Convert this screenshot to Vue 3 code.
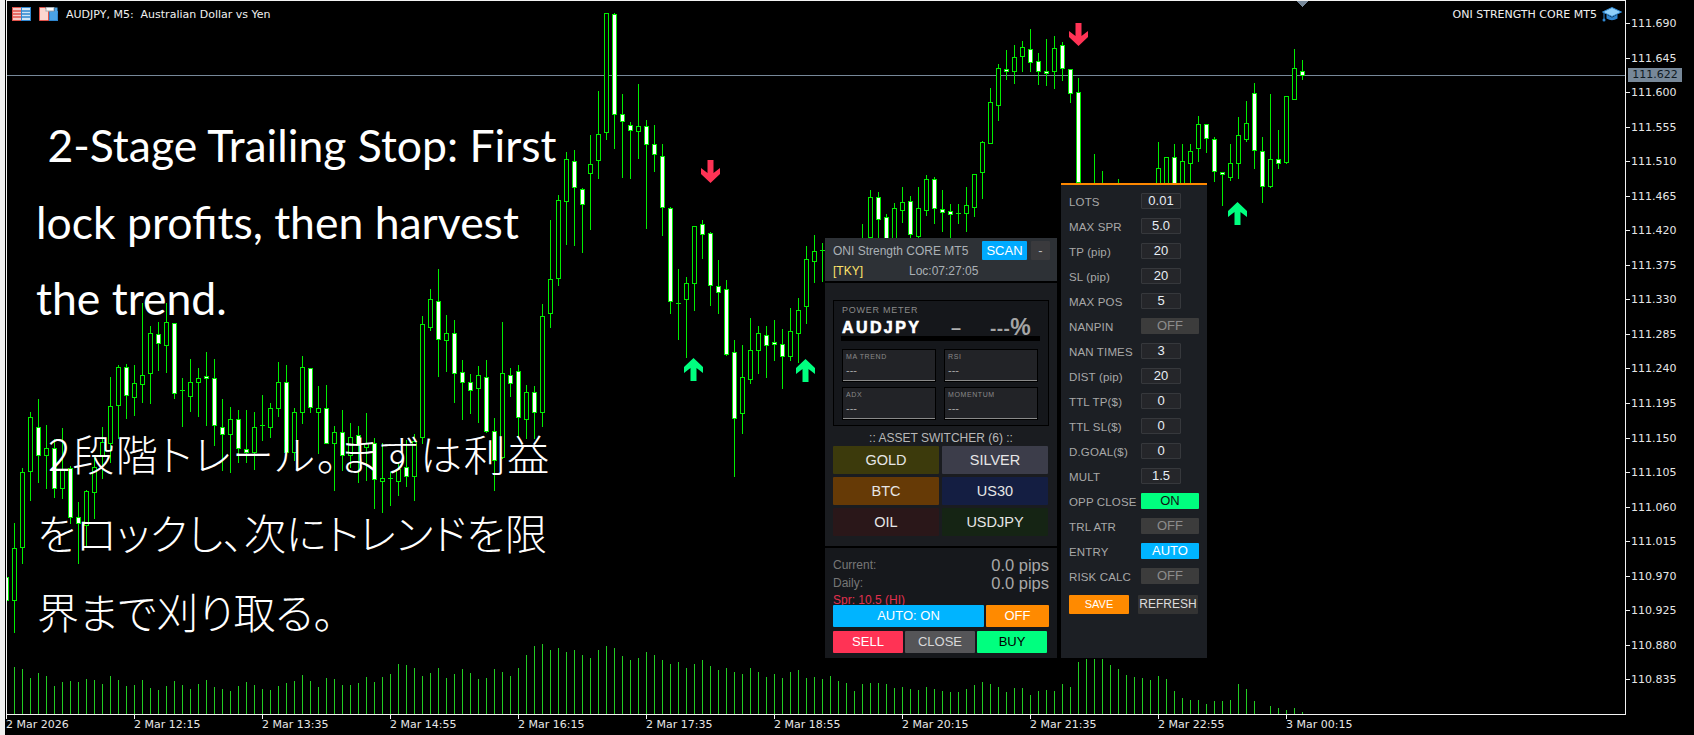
<script setup>
// [x, type (0 hollow, 1 white, 2 doji, 3 wick only), high, bodyTop, bodyBottom, low]
const rawBars = [
[6,1,560,577,600,640],[14,0,523,548,600,632],[22,0,468,472,547,563],[30,0,412,417,471,500],[38,1,399,427,455,482],
[46,0,425,448,455,488],[54,1,439,448,488,497],[62,0,428,469,488,498],[70,1,466,468,517,523],[78,1,502,517,523,563],
[86,0,490,491,525,545],[94,0,457,467,492,518],[102,0,427,442,455,478],[110,0,377,406,443,462],[118,0,365,367,405,438],
[126,1,364,367,395,418],[134,0,365,383,397,415],[142,0,303,375,384,402],[150,0,326,333,373,403],[158,1,322,334,343,370],
[166,0,303,322,345,372],[174,1,323,323,393,398],[182,2,378,390,390,426],[190,0,359,382,396,411],[198,0,368,378,382,416],
[206,1,352,376,378,425],[214,1,359,378,425,445],[222,1,399,427,434,470],[230,0,407,419,434,472],[238,1,410,419,448,462],
[246,1,410,449,452,462],[254,0,412,427,452,469],[262,2,395,425,425,440],[270,0,403,408,427,437],[278,0,362,382,408,416],
[286,1,365,382,452,452],[294,0,408,412,452,460],[302,0,356,367,412,423],[310,1,368,368,407,412],[318,0,386,408,412,453],
[326,1,385,408,443,443],[334,0,426,432,443,490],[342,1,410,432,455,470],[350,0,423,437,455,467],[358,1,426,435,445,482],
[366,0,413,443,447,480],[374,1,438,443,479,508],[382,0,443,478,481,512],[390,2,472,478,478,505],[398,0,462,469,481,495],
[406,1,440,467,476,486],[414,0,434,441,476,500],[422,0,316,324,437,443],[430,0,289,299,327,330],[438,1,269,301,339,376],
[446,0,315,333,340,371],[454,1,320,333,373,402],[462,1,360,372,382,419],[470,1,374,382,390,413],[478,0,366,375,388,422],
[486,1,360,377,431,432],[494,1,418,431,460,490],[502,0,322,373,457,458],[510,1,368,375,383,396],[518,1,365,371,417,437],
[526,0,385,392,419,438],[534,1,386,392,412,438],[542,0,304,316,412,426],[550,0,220,279,313,327],[558,0,195,200,278,285],
[566,0,152,159,201,244],[574,1,150,161,187,245],[582,1,188,189,204,252],[590,0,135,164,173,229],[598,0,91,134,160,178],
[606,0,13,13,132,139],[614,1,13,14,114,148],[622,1,94,114,121,177],[630,1,122,125,130,178],[638,0,84,126,131,158],
[646,1,120,126,144,228],[654,1,125,144,154,171],[662,1,144,156,207,235],[670,1,207,208,301,313],[678,2,269,303,303,339],
[686,0,277,283,299,357],[694,0,226,226,283,310],[702,1,220,224,234,258],[710,1,232,233,285,305],[718,1,260,286,292,313],
[726,1,280,289,354,355],[734,1,340,352,418,476],[742,0,345,377,413,433],[750,0,318,350,379,383],[758,0,326,333,350,373],
[766,1,326,335,345,377],[774,1,320,342,344,360],[782,1,329,344,356,388],[790,0,308,331,356,360],[798,0,298,310,333,362],
[806,0,246,259,306,323],[814,0,235,251,261,282],[822,2,243,250,250,281],
[862,3,224,0,0,240],[870,0,190,197,237,240],[878,1,192,197,219,240],[886,1,214,217,240,240],[894,0,203,208,240,240],
[902,0,187,202,210,222],[910,1,196,201,234,237],[918,0,187,208,236,238],[926,0,175,179,210,215],[934,1,177,179,208,223],
[942,1,190,209,212,231],[950,1,204,211,214,240],[958,2,204,213,213,223],[966,0,187,205,213,231],[974,0,174,174,207,216],
[982,0,141,142,172,198],[990,0,88,102,143,143],[998,0,64,68,105,120],[1006,1,50,69,71,79],[1014,0,45,57,71,83],
[1022,0,41,47,56,71],[1030,1,29,49,62,71],[1038,1,53,61,71,84],[1046,1,39,71,73,85],[1054,0,36,48,71,88],
[1062,1,42,45,68,80],[1070,1,69,69,93,102],[1078,1,78,92,182,200],[1094,3,154,0,0,190],[1102,3,171,0,0,190],[1118,3,179,0,0,190],
[1158,0,142,168,190,190],[1166,0,157,157,190,190],[1174,1,144,157,190,190],[1182,0,144,161,190,190],[1190,0,144,151,163,190],
[1198,0,116,124,148,161],[1206,1,124,124,138,152],[1214,1,137,139,171,181],[1222,1,172,172,174,205],[1230,0,144,163,177,180],
[1238,0,117,135,163,178],[1246,0,101,123,139,141],[1254,1,83,93,150,168],[1262,1,137,151,186,202],[1270,0,94,159,186,187],
[1278,1,130,159,163,168],[1286,0,96,96,162,163],[1294,0,49,68,99,99],[1302,1,60,71,75,79]
]
const bars = rawBars.map(([x, type, hi, top, bot, lo]) => ({ x, type, hi, top, bot, lo }))

const volumeTops = [
667,669,678,673,676,686,682,681,682,679,680,684,676,680,686,685,680,688,690,686,
681,685,689,684,680,687,689,691,686,682,685,689,690,686,683,681,675,681,687,678,
679,685,685,683,677,682,677,674,664,665,668,676,673,668,678,674,669,673,679,678,669,
672,676,668,655,646,644,650,648,652,650,655,658,650,646,648,656,660,658,652,655,660,664,662,668,664,660,666,670,668,672,674,668,672,677,674,678,672,670,678,
677,679,676,681,683,691,684,683,683,684,688,687,689,690,687,689,691,692,692,689,685,682,684,687,692,688,688,695,691,690,691,684,687,662,659,659,659,665,
669,675,677,678,680,676,679,691,698,700,700,704,701,701,700,684,689,701,714,706,708,710,708,712
]
const volumes = volumeTops.map((top, i) => ({ x: 14 + 8 * i, top }))

const chartTitle = 'AUDJPY, M5:  Australian Dollar vs Yen'
const prices = ['111.690','111.645','111.600','111.555','111.510','111.465','111.420','111.375','111.330','111.285','111.240','111.195','111.150','111.105','111.060','111.015','110.970','110.925','110.880','110.835']
const times = ['2 Mar 2026','2 Mar 12:15','2 Mar 13:35','2 Mar 14:55','2 Mar 16:15','2 Mar 17:35','2 Mar 18:55','2 Mar 20:15','2 Mar 21:35','2 Mar 22:55','3 Mar 00:15']

const downArrow = 'M6.5 0H12.5V13L19 8V14L9.5 23L0 14V8L6.5 13Z'
const upArrow = 'M6.5 23H12.5V10L19 15V9L9.5 0L0 9V15L6.5 10Z'
const arrows = [
  { d: downArrow, x: 701, y: 160, fill: '#ff3355' },
  { d: downArrow, x: 1069, y: 23, fill: '#ff3355' },
  { d: upArrow, x: 684, y: 358, fill: '#00ff7f' },
  { d: upArrow, x: 796, y: 359, fill: '#00ff7f' },
  { d: upArrow, x: 1228, y: 202, fill: '#00ff7f' }
]

const cards = [
  { label: 'MA TREND' }, { label: 'RSI' }, { label: 'ADX' }, { label: 'MOMENTUM' }
]
const assets = [
  { name: 'GOLD', cls: 'gold' }, { name: 'SILVER', cls: 'silver' },
  { name: 'BTC', cls: 'btc' }, { name: 'US30', cls: 'us30' },
  { name: 'OIL', cls: 'oil' }, { name: 'USDJPY', cls: 'usdjpy' }
]
const settings = [
  { label: 'LOTS', value: '0.01' }, { label: 'MAX SPR', value: '5.0' },
  { label: 'TP (pip)', value: '20' }, { label: 'SL (pip)', value: '20' },
  { label: 'MAX POS', value: '5' }, { label: 'NANPIN', toggle: 'off', value: 'OFF' },
  { label: 'NAN TIMES', value: '3' }, { label: 'DIST (pip)', value: '20' },
  { label: 'TTL TP($)', value: '0' }, { label: 'TTL SL($)', value: '0' },
  { label: 'D.GOAL($)', value: '0' }, { label: 'MULT', value: '1.5' },
  { label: 'OPP CLOSE', toggle: 'on', value: 'ON' }, { label: 'TRL ATR', toggle: 'off', value: 'OFF' },
  { label: 'ENTRY', toggle: 'auto', value: 'AUTO' }, { label: 'RISK CALC', toggle: 'off', value: 'OFF' }
]
</script>

<template>
  <div class="terminal">
    <div class="strip"></div>

    <div class="plot">
      <svg class="chart" width="1618" height="713" viewBox="7 1 1618 713" shape-rendering="crispEdges">
        <line x1="7" x2="1625" y1="75.5" y2="75.5" stroke="#778899" />
        <line v-for="v in volumes" :key="'v' + v.x" :x1="v.x + 0.5" :x2="v.x + 0.5" :y1="v.top" y2="714" stroke="#22cc22" />
        <g v-for="b in bars" :key="'b' + b.x">
          <line :x1="b.x + 0.5" :x2="b.x + 0.5" :y1="b.hi" :y2="b.lo + 1" stroke="#00ee00" />
          <line v-if="b.type === 2" :x1="b.x - 2" :x2="b.x + 3" :y1="b.top + 0.5" :y2="b.top + 0.5" stroke="#00ee00" />
          <rect v-else-if="b.type !== 3" :x="b.x - 1.5" :y="b.top + 0.5" width="4" :height="Math.max(b.bot - b.top, 1)"
                :fill="b.type === 1 ? '#ffffff' : '#000000'" stroke="#00ee00" />
        </g>
        <polygon points="1296,1 1308,1 1302,7" fill="#778899" />
        <path v-for="a in arrows" :key="a.x" :d="a.d" :fill="a.fill" :transform="`translate(${a.x} ${a.y})`" shape-rendering="auto" />
      </svg>

      <div class="title">
        <svg class="win-icon" width="19" height="14" viewBox="0 0 19 14">
          <rect x="0.5" y="0.5" width="9" height="13" fill="#f7c9c4" stroke="#e0524a" />
          <rect x="9.5" y="0.5" width="9" height="13" fill="#cfe5f7" stroke="#2f86cf" />
          <path d="M1 4h8M1 7h8M1 10h8" stroke="#e0524a" stroke-width="1.6" />
          <path d="M10 4h8M10 7h8M10 10h8" stroke="#2f86cf" stroke-width="1.6" />
        </svg>
        <svg class="win-icon" width="19" height="14" viewBox="0 0 19 14">
          <path d="M0.5 0.5H6L9.5 4V13.5H0.5Z" fill="#fbd5cf" stroke="#e0524a" />
          <rect x="10.5" y="4.5" width="8" height="9" fill="#4aa3e6" stroke="#2f86cf" />
          <rect x="7" y="0.5" width="8" height="3.5" fill="#fff" stroke="#a8adb3" />
          <rect x="15.5" y="0.5" width="3" height="6" fill="#4aa3e6" />
        </svg>
        <span class="title-text">{{ chartTitle }}</span>
      </div>

      <div class="ea-name">
        <span>ONI STRENGTH CORE MT5</span>
        <svg width="20" height="15" viewBox="0 0 20 15">
          <path d="M4.5 7.5V11.5Q10 15 15.5 11.5V7.5L10 10.5Z" fill="#2f86cf" />
          <path d="M0.5 5L10 0.5L19.5 5L10 9.5Z" fill="#8fd0fa" stroke="#2f86cf" />
          <path d="M2 5.5V12" stroke="#2f86cf" />
          <circle cx="2" cy="13" r="1.5" fill="#2f86cf" />
        </svg>
      </div>

      <div class="overlay">
        <div class="en">
          <p>{{ ' 2-Stage Trailing Stop: First' }}</p>
          <p>lock profits, then harvest</p>
          <p>the trend.</p>
        </div>
        <div class="ja">
          <p class="ja-first">{{ ' 2段階トレール。まずは利益' }}</p>
          <p>をロックし、次にトレンドを限</p>
          <p>界まで刈り取る。</p>
        </div>
      </div>

      <section class="panel-left">
        <header class="pl-header">
          <div class="pl-head-row">
            <span class="pl-title">ONI Strength CORE MT5</span>
            <span class="scan">SCAN</span>
            <span class="minus">-</span>
          </div>
          <div class="pl-head-row second">
            <span class="session">[TKY]</span>
            <span class="clock">Loc:07:27:05</span>
          </div>
        </header>

        <div class="pl-body">
          <div class="meter">
            <div class="meter-label">POWER METER</div>
            <div class="meter-main">
              <span class="meter-sym">AUDJPY</span>
              <span class="meter-dash">–</span>
              <span class="meter-pct">---<b>%</b></span>
            </div>
            <div class="meter-bar"></div>
            <div class="cards">
              <div v-for="c in cards" :key="c.label" class="card">
                <div class="card-label">{{ c.label }}</div>
                <div class="card-value">---</div>
              </div>
            </div>
          </div>
          <div class="switch-title">:: ASSET SWITCHER (6) ::</div>
          <div class="assets">
            <div v-for="a in assets" :key="a.name" class="asset" :class="a.cls">{{ a.name }}</div>
          </div>
        </div>

        <div class="pl-foot">
          <div class="stat"><span class="stat-k">Current:</span><span class="stat-v">0.0 pips</span></div>
          <div class="stat"><span class="stat-k">Daily:</span><span class="stat-v">0.0 pips</span></div>
          <div class="spread">Spr: 10.5 (HI)</div>
          <div class="btn-row">
            <div class="btn auto">AUTO: ON</div>
            <div class="btn off">OFF</div>
          </div>
          <div class="btn-row trade">
            <div class="btn sell">SELL</div>
            <div class="btn close">CLOSE</div>
            <div class="btn buy">BUY</div>
          </div>
        </div>
      </section>

      <section class="panel-right">
        <div v-for="s in settings" :key="s.label" class="set-row">
          <span class="set-label">{{ s.label }}</span>
          <span v-if="s.toggle" class="toggle" :class="s.toggle">{{ s.value }}</span>
          <span v-else class="input">{{ s.value }}</span>
        </div>
        <div class="set-actions">
          <span class="save">SAVE</span>
          <span class="refresh">REFRESH</span>
        </div>
      </section>
    </div>

    <div class="price-axis">
      <div v-for="p in prices" :key="p" class="price-row"><i></i><span>{{ p }}</span></div>
      <div class="price-tag">111.622</div>
    </div>

    <div class="time-axis">
      <div v-for="t in times" :key="t" class="time-cell">{{ t }}</div>
    </div>
  </div>
</template>

<style scoped>
.terminal {
  width: 1694px;
  height: 735px;
  background: #000;
  position: relative;
  overflow: hidden;
  display: grid;
  grid-template-columns: 6px 1620px 68px;
  grid-template-rows: 715px 20px;
  font-family: "DejaVu Sans", sans-serif;
  color: #e6e6e6;
}
.strip {
  grid-row: 1 / span 2;
  width: 5px;
  background: #f0f0f0;
}
.plot {
  position: relative;
  border: 1px solid #f2f2f2;
  box-sizing: border-box;
  background: #000;
}
.chart { position: absolute; left: 0; top: 0; display: block; }

.title {
  position: absolute;
  left: 5px;
  top: 6px;
  display: flex;
  align-items: center;
  gap: 8px;
  height: 14px;
}
.title-text {
  font-size: 11px;
  white-space: pre;
  color: #f0f0f0;
}
.win-icon { display: block; }

.ea-name {
  position: absolute;
  right: 3px;
  top: 6px;
  display: flex;
  align-items: center;
  gap: 5px;
  font-size: 11px;
  color: #f0f0f0;
}

.overlay {
  position: absolute;
  left: 30px;
  top: 0;
  color: #fff;
  pointer-events: none;
}
.overlay p { margin: 0; white-space: pre; }
.en {
  padding-top: 106px;
  margin-left: -1px;
  font-family: Lato, "Noto Sans", sans-serif;
  font-size: 44.5px;
  line-height: 76.5px;
}
.ja {
  padding-top: 76px;
  font-family: "Noto Sans CJK JP", sans-serif;
  font-weight: 300;
  font-size: 42px;
  line-height: 79px;
  font-feature-settings: "palt";
}
.ja-first { letter-spacing: 1.7px; }

.panel-left {
  position: absolute;
  left: 818px;
  top: 237px;
  width: 232px;
  height: 420px;
  display: flex;
  flex-direction: column;
  background: #000;
  font-family: "Liberation Sans", Arial, sans-serif;
}
.pl-header {
  height: 43px;
  background: #2d3136;
  padding: 3px 7px 0 8px;
  box-sizing: border-box;
}
.pl-head-row {
  display: flex;
  align-items: center;
  height: 19px;
}
.pl-head-row.second { height: 21px; }
.pl-title { width: 149px; font-size: 12px; color: #aab0b5; white-space: nowrap; }
.scan {
  width: 45px;
  height: 19px;
  line-height: 19px;
  text-align: center;
  background: #00aaff;
  color: #fff;
  font-size: 13px;
  border-radius: 1px;
}
.minus {
  width: 19px;
  height: 19px;
  line-height: 19px;
  margin-left: 4px;
  text-align: center;
  background: #3a3a3d;
  color: #bbb;
  font-size: 13px;
  border-radius: 1px;
}
.session { width: 76px; font-size: 12px; color: #ffe46a; }
.clock { font-size: 12px; color: #aab0b5; }

.pl-body {
  margin-top: 2px;
  height: 263px;
  background: #1a1c20;
  padding: 17px 8px 0;
  box-sizing: border-box;
}
.meter {
  width: 216px;
  height: 126px;
  box-sizing: border-box;
  border: 1px solid #000;
  background: #15171b;
  padding: 4px 8px 0;
}
.meter-label {
  height: 11px;
  line-height: 11px;
  font-size: 9px;
  letter-spacing: 0.75px;
  color: #8a8a8a;
}
.meter-main {
  display: grid;
  grid-template-columns: 109px 39px auto;
  align-items: center;
  height: 20px;
}
.meter-sym {
  font-size: 16px;
  font-weight: 700;
  letter-spacing: 2.4px;
  color: #fff;
  -webkit-text-stroke: 0.6px #fff;
}
.meter-dash { font-size: 18px; font-weight: 700; color: #b0b0b0; padding-top: 2px; }
.meter-pct { font-size: 19px; font-weight: 700; color: #a5a5a5; line-height: 20px; letter-spacing: 0.4px; white-space: nowrap; }
.meter-pct b { font-size: 23px; letter-spacing: -2px; }
.meter-bar {
  width: 199px;
  height: 5px;
  margin-left: -1px;
  background: #000;
}
.cards {
  display: grid;
  grid-template-columns: 94px 94px;
  grid-template-rows: 33px 33px;
  column-gap: 8px;
  row-gap: 5px;
  margin-top: 8px;
}
.card {
  box-sizing: border-box;
  border: 1px solid #000;
  background: #222327;
  box-shadow: inset 0 -1px #8a8a8a;
  padding: 2px 3px 0 3px;
}
.card-label {
  font-size: 7px;
  line-height: 9px;
  letter-spacing: 0.6px;
  color: #8a8a8a;
}
.card-value {
  font-size: 11px;
  line-height: 13px;
  margin-top: 3px;
  color: #a8a8a8;
}
.switch-title {
  height: 20px;
  line-height: 24px;
  text-align: center;
  font-size: 12px;
  color: #b8b8b8;
}
.assets {
  display: grid;
  grid-template-columns: 106px 106px;
  grid-auto-rows: 28px;
  column-gap: 3px;
  row-gap: 3px;
}
.asset {
  line-height: 28px;
  text-align: center;
  font-size: 14.5px;
  color: #e6e6e6;
  border-radius: 1px;
}
.gold { background: #3c3a0c; }
.silver { background: #3c3d4a; }
.btc { background: #663a06; }
.us30 { background: #141e42; }
.oil { background: #2a1719; }
.usdjpy { background: #152414; }

.pl-foot {
  margin-top: 2px;
  flex: 1;
  background: #16181c;
  padding: 8px 8px 0;
  box-sizing: border-box;
}
.stat {
  display: flex;
  justify-content: space-between;
  align-items: center;
  height: 18px;
}
.stat-k { font-size: 12px; color: #777; }
.stat-v { font-size: 16.5px; color: #a8a8a8; }
.spread {
  height: 13px;
  line-height: 16px;
  font-size: 12px;
  color: #e0304e;
}
.btn-row { display: flex; gap: 2px; }
.btn-row.trade { margin-top: 4px; }
.btn {
  height: 22px;
  line-height: 22px;
  text-align: center;
  font-size: 13px;
  color: #fff;
  border-radius: 1px;
}
.auto { width: 151px; background: #00b4ff; }
.off { width: 63px; background: #ff8a00; }
.sell { width: 70px; background: #ff3355; }
.close { width: 70px; background: #555558; color: #d8d8d8; }
.buy { width: 70px; background: #00ff7f; color: #000; }

.panel-right {
  position: absolute;
  left: 1054px;
  top: 182px;
  width: 146px;
  height: 475px;
  box-sizing: border-box;
  border-top: 2px solid #ff8800;
  background: #1c1f24;
  padding: 3.5px 8px 0;
  font-family: "Liberation Sans", Arial, sans-serif;
}
.set-row {
  display: flex;
  align-items: center;
  height: 25px;
}
.set-label {
  width: 72px;
  font-size: 11.5px;
  letter-spacing: 0.15px;
  color: #a8a8a8;
  padding-top: 2px;
  white-space: nowrap;
}
.input {
  box-sizing: border-box;
  width: 40px;
  height: 16px;
  line-height: 13px;
  text-align: center;
  background: #25262a;
  border: 1px solid #36383c;
  border-radius: 1px;
  font-size: 13px;
  color: #e8eef5;
}
.toggle {
  width: 58px;
  height: 16px;
  line-height: 15px;
  text-align: center;
  font-size: 13px;
  border-radius: 1px;
}
.toggle.off { background: #3c3c3c; color: #8c8c8c; }
.toggle.on { background: #00ff7f; color: #111; }
.toggle.auto { background: #00b4ff; color: #fff; }
.set-actions {
  display: flex;
  gap: 9px;
  margin-top: 6.5px;
}
.save, .refresh {
  width: 60px;
  height: 19px;
  line-height: 19px;
  text-align: center;
  border-radius: 1px;
}
.save { background: #ff8a00; color: #fff; font-size: 11px; }
.refresh { background: #333; color: #ddd; font-size: 12px; }

.price-axis {
  position: relative;
  padding-top: 6.2px;
  font-size: 11px;
  color: #e6e6e6;
}
.price-row {
  display: flex;
  align-items: center;
  height: 34.55px;
}
.price-row i {
  display: block;
  width: 4px;
  height: 1px;
  background: #f2f2f2;
  margin-right: 1px;
}
.price-tag {
  position: absolute;
  left: 2px;
  top: 68px;
  width: 54px;
  height: 14px;
  line-height: 14px;
  text-align: center;
  background: #778899;
  color: #0f1a24;
}

.time-axis {
  grid-column: 2 / span 2;
  display: flex;
  font-size: 11px;
  color: #e6e6e6;
}
.time-cell {
  position: relative;
  flex: 0 0 128px;
  box-sizing: border-box;
  padding-top: 3px;
  line-height: 14px;
  white-space: nowrap;
}
.time-cell::before {
  content: "";
  position: absolute;
  left: 0;
  top: 0;
  width: 1px;
  height: 4px;
  background: #f2f2f2;
}
</style>

<style>
html, body { margin: 0; background: #000; overflow: hidden; }
</style>
